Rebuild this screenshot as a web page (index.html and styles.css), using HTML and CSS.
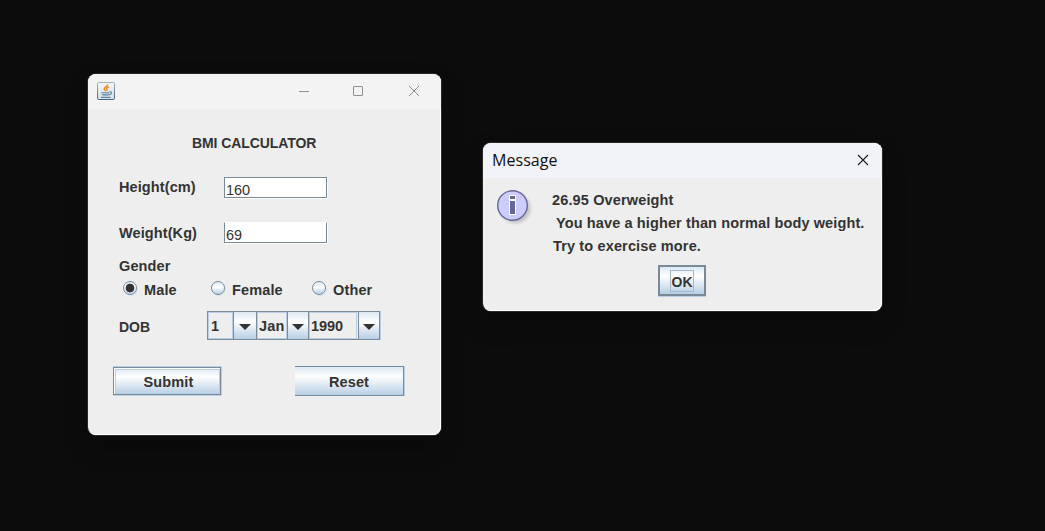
FILE: index.html
```html
<!DOCTYPE html>
<html lang="en">
<head>
<meta charset="utf-8">
<title>BMI Calculator</title>
<link rel="stylesheet" href="styles.css">
</head>
<body>
<main class="desktop">
  <section class="window calculator">
    <header class="titlebar">
      <svg class="java" width="18" height="18" viewBox="0 0 18 18">
        <defs><linearGradient id="jg" x1="0" y1="0" x2="0" y2="1"><stop offset="0" stop-color="#f4f6f8"/><stop offset="1" stop-color="#d3dfe9"/></linearGradient>
        <linearGradient id="jb" x1="0" y1="0" x2="0" y2="1"><stop offset="0" stop-color="#a5b1ba"/><stop offset="1" stop-color="#44667f"/></linearGradient></defs>
        <rect x=".5" y=".5" width="17" height="17" rx="1.2" fill="url(#jg)" stroke="url(#jb)"/>
        <path d="M10.600 2.400C11.200 4.600 6.700 5.200 7.200 7.200c.2.900 1 1 1.300 1.800M11.900 5C9.600 5.800 8.900 6.700 9.800 7.600c.5.600.2 1-.3 1.400" fill="none" stroke="#ef8a2d" stroke-width="1.500"/>
        <path d="M4.300 10h8v1c0 2.300-1.400 2.800-2.500 2.800h-3c-1.500 0-2.300-1-2.500-3.800z" fill="#7f9bb3"/>
        <path d="M12.500 9.700c3.400-.4 2.300 3-.8 3.200M4 15.300h9.500" fill="none" stroke="#6686a2" stroke-width="1.200"/>
        <path d="M5 11.500h6.500" stroke="#d5e0ea" stroke-width=".7"/>
      </svg>
      <svg class="controls" width="124" height="12" viewBox="0 0 124 12" fill="none" stroke="#8e8e8e">
        <path d="M0 6.500h10"/>
        <rect x="54.500" y="1.500" width="9" height="9" rx=".5"/>
        <path d="M110 1l10 10M120 1L110 11"/>
      </svg>
    </header>
    <form class="form">
      <h1 class="heading">BMI CALCULATOR</h1>
      <div class="field field-height"><span class="label">Height(cm)</span><span class="input">160</span></div>
      <div class="field field-weight"><span class="label">Weight(Kg)</span><span class="input input-open">69</span></div>
      <div class="gender">Gender</div>
      <div class="radios">
        <span class="option"><i class="radio checked"></i>Male</span>
        <span class="option"><i class="radio"></i>Female</span>
        <span class="option"><i class="radio"></i>Other</span>
      </div>
      <div class="dob">
        <span class="dob-label">DOB</span>
        <div class="combos">
          <span class="value day">1</span><span class="arrow"><svg width="12" height="6"><path d="M0 0h12L6 6z"/></svg></span>
          <span class="value month">Jan</span><span class="arrow narrow"><svg width="12" height="6"><path d="M0 0h12L6 6z"/></svg></span>
          <span class="value year">1990</span><span class="arrow"><svg width="12" height="6"><path d="M0 0h12L6 6z"/></svg></span>
        </div>
      </div>
      <div class="actions">
        <span class="button submit"><span class="submit-face">Submit</span></span>
        <span class="button reset">Reset</span>
      </div>
    </form>
  </section>

  <section class="window dialog">
    <header class="titlebar dialog-bar">
      <span class="dialog-title">Message</span>
      <svg width="12" height="12" viewBox="0 0 12 12" fill="none" stroke="#1b1b1b" stroke-width="1.100"><path d="M1 1l10 10M11 1L1 11"/></svg>
    </header>
    <div class="dialog-body">
      <svg class="info" width="40" height="40" viewBox="0 0 40 40">
        <circle class="info-shadow" cx="19.500" cy="19.500" r="15"/>
        <circle cx="16.500" cy="16.500" r="14.800" fill="#ccccff" stroke="#666699" stroke-width="1.400"/>
        <path d="M13 6h7v5h-7zM13 11h7v15h-7z" fill="#fff"/>
        <path d="M14 7h5v3h-5zM14 12h5v13h-5z" fill="#666699"/>
      </svg>
      <div class="message">
        <p class="line">26.95 Overweight</p>
        <p class="line indent">You have a higher than normal body weight.</p>
        <p class="line last">Try to exercise more.</p>
      </div>
    </div>
    <div class="dialog-actions"><span class="button ok"><span class="focus">OK</span></span></div>
  </section>
</main>
</body>
</html>
```
FILE: styles.css
```css
* { box-sizing: border-box; }
body { margin: 0; background: #0c0c0c; }
.desktop {
  position: relative;
  width: 1045px;
  height: 531px;
  overflow: hidden;
  background: #0c0c0c;
  color: #333;
  font: bold 14.5px/20px "Liberation Sans", Arial, sans-serif;
  letter-spacing: .14px;
  white-space: nowrap;
}
.window {
  position: absolute;
  overflow: hidden;
  border-radius: 8px;
  background: #eee;
  box-shadow: inset -1px -1px #fff, 0 0 0 1px #2b2b2b, 0 12px 24px rgba(0, 0, 0, .25);
}
.calculator { left: 88px; top: 74px; width: 353px; height: 361px; }
.dialog { left: 483px; top: 143px; width: 399px; height: 168px; }
.titlebar {
  display: flex;
  align-items: center;
  justify-content: space-between;
  height: 35px;
  padding: 0 14px 1px 9px;
  background: #f3f3f3;
}
.controls { margin-right: 4px; }
.calculator .titlebar { padding-right: 14px; }

.form { display: flex; flex-direction: column; padding: 24px 37px 0 25px; }
.heading { margin: 0 0 24px 79px; font-size: 14px; letter-spacing: -.08px; }
.field { display: flex; height: 22px; padding-left: 6px; }
.label { width: 105px; letter-spacing: .1px; }
.field-weight { margin-top: 23px; }
.field-weight .label { padding-top: 1px; }
.input {
  width: 103px;
  height: 21px;
  padding: 2px 0 0 1px;
  border: 1px solid #7a8a99;
  background: #fff;
  box-shadow: 1px 1px #fff;
  font-size: 14.5px;
  font-weight: normal;
  letter-spacing: -.1px;
}
.input-open { border-top-color: #fff; }
.gender { padding: 12px 0 0 6px; }
.radios { display: grid; grid-template-columns: 88px 101px 90px; margin-top: 4px; padding-left: 10px; }
.option { display: flex; gap: 7px; }
.radio {
  width: 14px;
  height: 14px;
  margin-top: 1px;
  border: 1px solid #7a8a99;
  border-radius: 50%;
  background: linear-gradient(#dce8f3, #fff 40%, #b8cfe5);
  box-shadow: 1px 1px #d5e2ee;
}
.checked { background: radial-gradient(circle, #333 0 4px, transparent 4.700px), linear-gradient(#dce8f3, #fff 40%, #b8cfe5); }
.dob { display: flex; margin-top: 11px; padding-left: 6px; }
.dob-label { width: 88px; padding-top: 6px; font-size: 14px; letter-spacing: 0; }
.combos { display: flex; width: 173px; height: 29px; border: 1px solid #7a8a99; box-shadow: 1px 0 #b8cfe5; }
.value { padding: 3px 0 0 2px; border: 1px solid #b8cfe5; }
.day { width: 25px; padding-left: 2px; }
.month { width: 30px; padding-left: 1px; }
.year { width: 48px; padding-left: 1px; margin-right: 1px; letter-spacing: -.1px; }
.arrow {
  display: flex;
  align-items: center;
  justify-content: center;
  width: 24px;
  padding-top: 2px;
  border: 0 solid #7a8a99;
  border-width: 0 1px;
  background: linear-gradient(#dce8f3, #fff 35%, #b8cfe5);
  fill: #333;
}
.narrow { width: 22px; }
.combos .arrow:last-child { width: 21px; border-right: 0; }
.actions { display: flex; justify-content: space-between; margin-top: 26px; }
.button { background: linear-gradient(#dce8f3, #fff 33%, #b8cfe5); text-align: center; }
.submit { width: 109px; height: 30px; padding: 1px 1px 1px 0; background: #b8cfe5; }
.submit-face {
  display: block;
  height: 28px;
  padding: 4px 0 0 3px;
  border: 1px solid #7a8a99;
  background: linear-gradient(#dce8f3, #fff 33%, #b8cfe5);
  box-shadow: inset 1px 1px #fff, inset 2px 2px #b8cfe5, inset -1px -1px #b8cfe5;
}
.reset { width: 109px; height: 30px; padding-top: 5px; border: solid #7a8a99; border-width: 1px 1px 1px 0; box-shadow: 1px 0 #b8cfe5; }

.dialog-bar { padding-right: 13px; background: #f2f3f8; }
.dialog-title { color: #111; font: 16px/34px "Open Sans", "Noto Sans", sans-serif; letter-spacing: .05px; }
.dialog-body { display: flex; height: 87px; padding: 11px 0 0 13px; }
.info { margin-right: 16px; }
.info-shadow { fill: #c6c6c6; filter: blur(1.500px); }
.line { margin: 0; line-height: 23px; }
.indent { padding-left: 4px; letter-spacing: .12px; }
.last { padding-left: 1px; }
.dialog-actions { display: flex; justify-content: center; padding-right: 1px; }
.ok { width: 48px; height: 31px; padding: 3px 10px; border: 2px solid #7a8a99; box-shadow: 0 1px #b8cfe5; }
.focus { display: block; height: 22px; border: 1px solid #a3b8cc; font-size: 14px; line-height: 23px; letter-spacing: 0; }
```
